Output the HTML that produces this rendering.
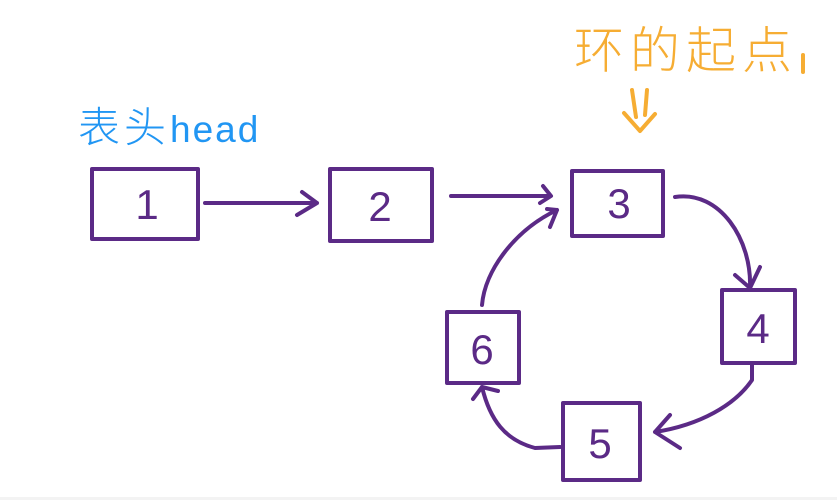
<!DOCTYPE html>
<html><head><meta charset="utf-8"><style>
html,body{margin:0;padding:0;background:#fff;width:837px;height:500px;overflow:hidden}
svg{display:block}
</style></head><body>
<svg width="837" height="500" viewBox="0 0 837 500" xmlns="http://www.w3.org/2000/svg">
<rect x="0" y="497" width="837" height="3" fill="#f3f3f3"/>
<g font-family="'Liberation Sans','Noto Sans CJK SC',sans-serif">
<text x="78" y="142" font-size="42" fill="#2196f3" font-weight="300" letter-spacing="4">表头<tspan font-size="37" letter-spacing="2">head</tspan></text>
<text x="574" y="68" font-size="50" fill="#f6ad33" font-weight="300" letter-spacing="6">环的起点</text>
</g>
<g fill="none" stroke="#f6ad33" stroke-width="4" stroke-linecap="round" stroke-linejoin="round">
<path d="M803 55 L803 72"/>
<path d="M632 90 L636 117 M647 90 L645 115 M624 113 L640 131 L655 114"/>
</g>
<g fill="none" stroke="#5b2a86" stroke-width="4" stroke-linecap="round" stroke-linejoin="round">
<rect x="92" y="169" width="106" height="70"/>
<rect x="330" y="169" width="102" height="72"/>
<rect x="572" y="171" width="91" height="65"/>
<rect x="722" y="290" width="73" height="73"/>
<rect x="563" y="403" width="77" height="77"/>
<rect x="447" y="312" width="72" height="71"/>
<path d="M205 203 L317 203 M302 192 L317 203 L297 215"/>
<path d="M451 196 L550 196 M543 186 L551 196 L540 203"/>
<path d="M675 197 C720 190 752 240 750 288 M735 275 L750 288 L760 267"/>
<path d="M752 365 L752 380 C735 405 700 425 655 432 M670 415 L655 432 L680 448"/>
<path d="M560 447 L535 448 C505 440 490 420 482 387 M473 399 L482 387 L498 391"/>
<path d="M482 305 C485 270 515 230 557 210 M547 209 L557 210 L550 227"/>
</g>
<g font-family="'Liberation Sans',sans-serif" font-size="42" fill="#5b2a86" text-anchor="middle">
<text x="147" y="219">1</text>
<text x="380" y="221">2</text>
<text x="619" y="218">3</text>
<text x="758" y="343">4</text>
<text x="600" y="458">5</text>
<text x="482" y="364">6</text>
</g>
</svg>
</body></html>
